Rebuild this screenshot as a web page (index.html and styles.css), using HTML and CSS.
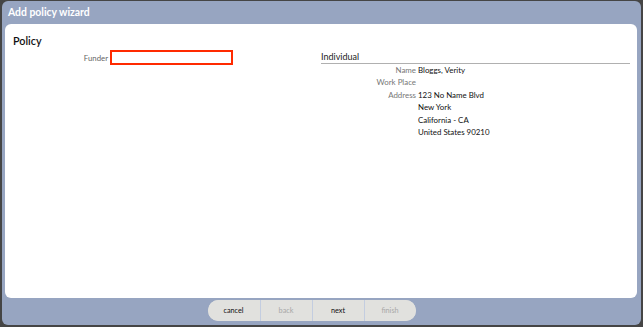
FILE: index.html
```html
<!DOCTYPE html>
<html lang="en">
<head>
    <meta charset="UTF-8">
    <title>Add policy wizard</title>
    <link rel="stylesheet" href="styles.css">
</head>
<body>
    <div class="dialog">
        <div class="dialog-title">Add policy wizard</div>

        <div class="panel">
            <h2>Policy</h2>
            <div class="columns">
                <div class="left-col">
                    <div class="form-row">
                        <label for="funder">Funder</label>
                        <input id="funder" type="text">
                    </div>
                </div>

                <div class="right-col">
                    <h3>Individual</h3>
                    <div class="details">
                        <span class="key">Name</span><span class="val">Bloggs, Verity</span>
                        <span class="key">Work Place</span><span class="val"></span>
                        <span class="key">Address</span><span class="val">123 No Name Blvd</span>
                        <span class="key"></span><span class="val">New York</span>
                        <span class="key"></span><span class="val">California - CA</span>
                        <span class="key"></span><span class="val">United States 90210</span>
                    </div>
                </div>
            </div>
        </div>

        <div class="footer">
            <div class="btn-group">
                <button class="btn">cancel</button>
                <button class="btn disabled">back</button>
                <button class="btn">next</button>
                <button class="btn disabled">finish</button>
            </div>
        </div>
    </div>
</body>
</html>
```

FILE: styles.css
```css
* {
    margin: 0;
    padding: 0;
    box-sizing: border-box;
}

body {
    font-family: 'Lato', 'Liberation Sans', sans-serif;
    background: #454545;
    width: 643px;
    height: 327px;
    overflow: hidden;
}

.dialog {
    margin: 1px 2px 0 2px;
    height: 324px;
    background: #97a5c1;
    border-radius: 6px;
    display: flex;
    flex-direction: column;
}

.dialog-title {
    height: 23px;
    padding: 5px 0 0 6px;
    color: #fff;
    font-size: 10.4px;
    font-weight: bold;
    line-height: 12px;
}

.panel {
    height: 274px;
    margin: 0 4px 0 3px;
    background: #fff;
    border-radius: 6px;
    padding: 10px 7px 0 8px;
}

h2 {
    font-size: 10.8px;
    font-weight: 600;
    color: #111;
    line-height: 13px;
}

.columns {
    display: flex;
}

.left-col {
    width: 308px;
}

.form-row {
    display: flex;
    align-items: center;
    gap: 2px;
    margin-top: 3px;
}

.form-row label {
    width: 95px;
    text-align: right;
    font-size: 7.8px;
    color: #666;
}

.form-row input {
    width: 123px;
    height: 15px;
    border: 2px solid #ff2a00;
    outline: none;
}

.right-col {
    flex: 1;
}

h3 {
    font-size: 9px;
    font-weight: normal;
    color: #222;
    border-bottom: 1px solid #b0b0b0;
    line-height: 11px;
    padding-bottom: 1px;
    margin-top: 4px;
}

.details {
    display: grid;
    grid-template-columns: 95px 1fr;
    column-gap: 2px;
    grid-auto-rows: 12.4px;
    font-size: 7.9px;
    line-height: 12.4px;
}

.key {
    text-align: right;
    color: #777;
}

.val {
    color: #111;
}

.footer {
    flex: 1;
    display: flex;
    justify-content: center;
    padding-top: 2px;
}

.btn-group {
    display: flex;
    height: 21px;
    border-radius: 11px;
    overflow: hidden;
    background: #e1e1de;
    margin-right: 20px;
}

.btn {
    width: 52px;
    border: none;
    border-left: 1px solid #c3cde0;
    background: #e1e1de;
    font-family: 'Lato', 'Liberation Sans', sans-serif;
    font-size: 7.3px;
    color: #111;
}

.btn:first-child {
    border-left: none;
}

.btn.disabled {
    color: #a8a8a8;
}
```
